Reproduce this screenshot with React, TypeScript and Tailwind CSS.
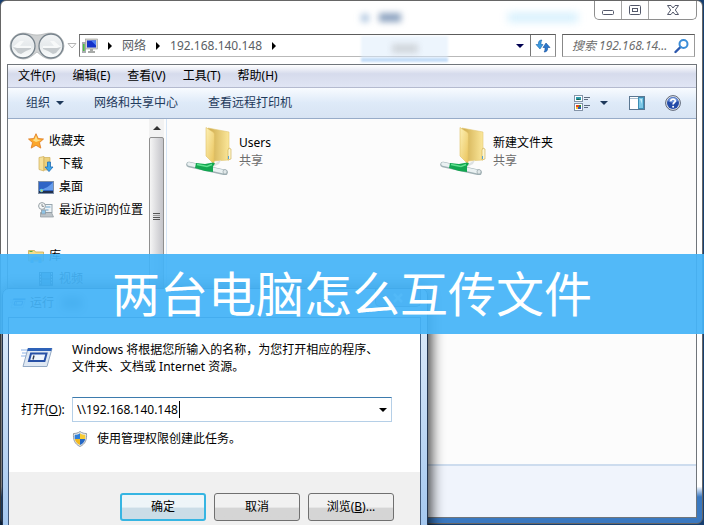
import type { ReactNode } from "react";

const menus = ["文件(F)", "编辑(E)", "查看(V)", "工具(T)", "帮助(H)"];

const folders = ["Users", "新建文件夹"];

function Triangle({ className = "" }: { className?: string }) {
  return (
    <svg className={`h-1 w-2 ${className}`} viewBox="0 0 8 4" fill="currentColor">
      <path d="M0 0h8L4 4z" />
    </svg>
  );
}

function Crumb() {
  return (
    <svg className="h-2 w-1" viewBox="0 0 4 8" fill="#000">
      <path d="M0 0l4 4-4 4z" />
    </svg>
  );
}

function HistoryButtons() {
  return (
    <svg className="h-7 w-14" viewBox="0 0 56 28">
      <defs>
        <linearGradient id="orb" x1="0" y1="0" x2="0" y2="1">
          <stop offset="0" stopColor="#f4f6f7" />
          <stop offset=".45" stopColor="#e6eaec" />
          <stop offset=".6" stopColor="#eceff0" />
          <stop offset="1" stopColor="#fbfdfd" />
        </linearGradient>
      </defs>
      <path
        d="M14 1C20 1 22 3 28 3S36 1 42 1a13 13 0 0 1 0 26c-6 0-9-3-14-7-5 4-8 7-14 7a13 13 0 0 1 0-26z"
        fill="#cfd1d2"
        stroke="#b3b6b8"
        strokeWidth=".8"
      />
      <circle cx="14" cy="14" r="12" fill="url(#orb)" stroke="#77838c" strokeWidth="1.3" />
      <circle cx="42" cy="14" r="12" fill="url(#orb)" stroke="#77838c" strokeWidth="1.3" />
      <path d="M4 15h18v2l-5 2-5 3-3-1z" fill="#c6cbce" />
      <path d="M4 15l7-6h4l-4 5h11v2H8z" fill="#f7f9f9" />
      <path d="M52 15H34v2l5 2 5 3 3-1z" fill="#c6cbce" />
      <path d="M52 15l-7-6h-4l4 5H34v2h14z" fill="#f7f9f9" />
    </svg>
  );
}

function NetworkIcon() {
  return (
    <svg className="h-4 w-4" viewBox="0 0 16 16">
      <rect x="0" y="4" width="4" height="11" fill="#a9adaf" />
      <rect x="1" y="6" width="1.5" height="7" fill="#49c33e" />
      <rect x="3.5" y="1" width="12" height="10" fill="#d5d5cf" stroke="#9a9a94" strokeWidth=".6" />
      <rect x="5" y="2.5" width="9" height="7" fill="#1532c9" />
      <path d="M9 2.5h5v5z" fill="#4c7df2" />
      <path d="M8 11h3v2h2v2H6v-2h2z" fill="#a8aaa8" />
    </svg>
  );
}

function RefreshIcon() {
  return (
    <svg className="h-4 w-4" viewBox="0 0 16 16">
      <path d="M7 2C4 2 3 4 3.500 6.500H1L5 11l3-4.500H6C6 4.500 6 3 7 2z" fill="#3a9be0" stroke="#1d65ac" strokeWidth=".6" />
      <path d="M9 14c3 0 4-2 3.500-4.500H15L11 5 8 9.500h2C10 11.500 10 13 9 14z" fill="#2b78cd" stroke="#174f99" strokeWidth=".6" />
    </svg>
  );
}

function SearchIcon() {
  return (
    <svg className="h-4 w-4 shrink-0" viewBox="0 0 16 16" fill="none">
      <path d="M6.500 9L1.500 14" stroke="#2d58ad" strokeWidth="2.400" strokeLinecap="round" />
      <circle cx="9.500" cy="6" r="4" stroke="#3b8dd8" strokeWidth="2" />
    </svg>
  );
}

function ViewIcon() {
  return (
    <svg className="h-4 w-4" viewBox="0 0 16 16">
      <rect x=".5" y=".5" width="8" height="6" fill="#fff" stroke="#8494a8" />
      <rect x="2" y="2" width="5" height="3" fill="#2f9cb0" />
      <path d="M2 5l2-1.500L7 5z" fill="#176348" />
      <rect x=".5" y="8.500" width="8" height="7" fill="#fff" stroke="#8494a8" />
      <rect x="2" y="10" width="3" height="2" fill="#e5431f" />
      <rect x="5" y="10" width="2" height="2" fill="#2f8f3a" />
      <rect x="2" y="12" width="2" height="2" fill="#f3c22b" />
      <rect x="4" y="12" width="3" height="2" fill="#3350b5" />
      <path d="M10 2.500h6M10 4.500h4M10 10.500h6M10 12.500h4" stroke="#5d6b80" />
    </svg>
  );
}

function PaneIcon() {
  return (
    <svg className="h-4 w-4" viewBox="0 0 16 16">
      <rect x=".5" y="1.500" width="15" height="13" fill="#fff" stroke="#5a7792" />
      <path d="M1 3.500h9" stroke="#a9bccd" />
      <rect x="9.500" y="2.500" width="5" height="11" fill="#7cc7e6" stroke="#3d8db3" />
      <path d="M11 4h2v5z" fill="#c7ecf8" />
    </svg>
  );
}

function HelpIcon() {
  return (
    <svg className="h-4 w-4" viewBox="0 0 16 16">
      <circle cx="8" cy="8" r="7.400" fill="#dfe5ef" stroke="#5d6575" />
      <circle cx="8" cy="8" r="6" fill="#234ba8" />
      <path d="M3 6a5.200 5.200 0 0 1 10 0c-3 2-7 2-10 0z" fill="#6d92d8" />
      <path d="M5.800 6.300C5.800 3.300 10.400 3.600 10.300 6c0 1.500-2.200 1.600-2.200 3.400" fill="none" stroke="#fff" strokeWidth="1.700" />
      <circle cx="8.100" cy="11.700" r="1" fill="#fff" />
    </svg>
  );
}

function StarIcon() {
  return (
    <svg className="h-4 w-4" viewBox="0 0 16 16">
      <path d="M8 .7l2.200 4.800 5.300.5-4 3.600 1.300 5.500L8 12.300l-4.800 2.800 1.300-5.500-4-3.600 5.300-.5z" fill="#fba72b" stroke="#e07a1d" strokeWidth=".8" />
      <path d="M8 2.500l1.600 4 3.800.4L8 9 4.500 7l2-.8z" fill="#ffdf83" />
    </svg>
  );
}

function DownloadIcon() {
  return (
    <svg className="h-4 w-4" viewBox="0 0 16 16">
      <path d="M1 1.500l5-1V15l-5-1.500z" fill="#f5e09a" stroke="#cfae56" strokeWidth=".7" />
      <path d="M6 1.500h6V14H6z" fill="#ecd07b" stroke="#cfae56" strokeWidth=".7" />
      <path d="M9.500 6h3v5H15l-4 4.600L7 11h2.500z" fill="#3ea6ea" stroke="#1f6db7" strokeWidth=".8" />
    </svg>
  );
}

function DesktopIcon() {
  return (
    <svg className="h-4 w-4" viewBox="0 0 16 16">
      <rect x=".5" y="2.500" width="15" height="12" fill="#2f65c6" stroke="#7d8fa8" />
      <path d="M1 11C7 10 12 7 15 3v8z" fill="#659cec" />
      <rect x="1" y="12" width="14" height="2" fill="#22314d" />
      <circle cx="3.500" cy="11.500" r="1.800" fill="#62c7d7" />
      <circle cx="3.800" cy="11.700" r=".8" fill="#f4cf45" />
    </svg>
  );
}

function RecentIcon() {
  return (
    <svg className="h-4 w-4" viewBox="0 0 16 16">
      <rect x="6" y="2.500" width="8" height="8" fill="#eef3f6" stroke="#97a5ae" />
      <path d="M7.500 5h5M7.500 8h3" stroke="#6ba4cc" />
      <path d="M2.500 10.500h11l2 4.500h-13z" fill="#bcc3c8" stroke="#8c969d" strokeWidth=".7" />
      <rect x="3.500" y="8" width="4" height="4" fill="#8fc4e6" stroke="#8c969d" strokeWidth=".7" />
      <circle cx="4" cy="4" r="3.400" fill="#f6f8f8" stroke="#98a1a6" />
      <path d="M4 2v2.300h2" fill="none" stroke="#6a7378" strokeWidth=".8" />
    </svg>
  );
}

function LibraryIcon() {
  return (
    <svg className="h-4 w-4" viewBox="0 0 16 16">
      <path d="M.5 2.500h6l1 1.500h8v9H.5z" fill="#f4dd8c" stroke="#c8a950" strokeWidth=".8" />
      <path d="M1.500 3.500h3" stroke="#4cb14b" strokeWidth="1.200" />
      <path d="M1 6h14v2H1z" fill="#fbf0bd" />
      <path d="M2.500 15V11c0-3 11-3 11 0v4h-3v-3h-5v3z" fill="#62b7e6" />
    </svg>
  );
}

function VideoIcon() {
  return (
    <svg className="h-4 w-4" viewBox="0 0 16 16">
      <rect x="1" y="1" width="14" height="14" fill="#26384a" />
      <rect x="4" y="2" width="8" height="5.500" fill="#5f8fb5" />
      <rect x="4" y="8.500" width="8" height="5.500" fill="#5f8fb5" />
      <path d="M2.500 2v12M13.500 2v12" stroke="#fff" strokeDasharray="1.500 1.500" />
    </svg>
  );
}

function SharedFolderIcon() {
  return (
    <svg className="h-12 w-12 shrink-0" viewBox="0 0 48 48">
      <defs>
        <linearGradient id="folderBack" x1="0" x2="1">
          <stop offset="0" stopColor="#cda94a" />
          <stop offset="1" stopColor="#fbe79a" />
        </linearGradient>
        <linearGradient id="folderFront" x1="0" x2="1" y2="1">
          <stop offset="0" stopColor="#fdf0b4" />
          <stop offset="1" stopColor="#e9c35a" />
        </linearGradient>
      </defs>
      <path d="M22 1l21 4v28l-15 1z" fill="url(#folderBack)" stroke="#e3c773" strokeWidth=".6" />
      <path d="M43 21l2 1v10l-3 1V23z" fill="#fdf5cf" stroke="#c9a747" strokeWidth=".6" />
      <path d="M42.500 29v3" stroke="#5ba2cf" />
      <path d="M20 .5l7 4.500c1.500 1 1.500 2 1.500 4l-.5 28-8-8z" fill="url(#folderFront)" stroke="#dfbf64" strokeWidth=".6" />
      <path d="M28 37l7-4-2 4-6 3z" fill="#dde1e2" />
      <path d="M3 37.500l36 8" stroke="#9fb0b4" strokeWidth="5.600" strokeLinecap="round" />
      <path d="M3 37l36 8" stroke="#eaf1f2" strokeWidth="3.600" strokeLinecap="round" />
      <path d="M10 36l9 1 8-1.500 2 1-2 3 0 5.500-8-1-10-3z" fill="#12a650" />
      <path d="M11 37.500l10 2 5-2" fill="none" stroke="#5fe08f" strokeWidth="1.500" />
      <ellipse cx="39" cy="44.800" rx="2" ry="2.300" fill="#dfe7e8" stroke="#95a4a7" strokeWidth=".7" />
    </svg>
  );
}

function RunIcon({ className }: { className: string }) {
  return (
    <svg className={className} viewBox="0 0 32 22">
      <path d="M0 3h9M1 6h7M0 9h6" stroke="#b4cdf0" strokeWidth="1.500" />
      <path d="M7 1.500h24l-5 18H2z" fill="#dfe8f3" stroke="#93a9c4" />
      <path d="M7 1h24l-.8 3H6.200z" fill="#2e62b8" />
      <path d="M10 6.500h15.500l-2 7.500H8z" fill="#eff5fd" stroke="#2750a6" strokeWidth="2" />
      <path d="M13 8.500l-1 4" stroke="#333c52" strokeWidth="1.400" />
    </svg>
  );
}

function ShieldIcon() {
  return (
    <svg className="h-4 w-4 shrink-0" viewBox="0 0 16 16">
      <path d="M8 .5c2 1.500 4 2 6.500 2 .5 6-1 10.500-6.500 13C2.500 13 1 8.500 1.500 2.500 4 2.500 6 2 8 .5z" fill="#e6e9ec" stroke="#7e8890" strokeWidth=".8" />
      <path d="M8 2.200V8H2.800a14 14 0 0 1 0-4.300C5 3.700 6.500 3.200 8 2.200z" fill="#2f7fd8" />
      <path d="M8 2.200V8h5.200a14 14 0 0 0 0-4.300C11 3.700 9.500 3.200 8 2.200z" fill="#f7cb35" />
      <path d="M8 14V8H2.800C3.400 10.800 5 12.800 8 14z" fill="#f2b91f" />
      <path d="M8 14V8h5.200c-.6 2.800-2.200 4.800-5.200 6z" fill="#2467c4" />
    </svg>
  );
}

function TreeItem({ icon, label, nested = false }: { icon: ReactNode; label: string; nested?: boolean }) {
  return (
    <a href="#" className={`flex h-[23px] items-center gap-[5px] whitespace-nowrap ${nested ? "pl-[30px]" : "pl-5"}`}>
      {icon}
      {label}
    </a>
  );
}

function WindowControls() {
  return (
    <div className="mr-[5px] flex h-[19px] rounded-b-[5px] border border-t-0 border-[#8e8e8e]">
      <button aria-label="最小化" className="flex w-[27px] items-center justify-center border-r border-[#a5a5a5]">
        <svg className="h-[14px] w-[14px]" viewBox="0 0 14 14">
          <rect x="1.500" y="7.500" width="11" height="4" rx="1" fill="#fff" stroke="#53586a" />
        </svg>
      </button>
      <button aria-label="最大化" className="flex w-[27px] items-center justify-center border-r border-[#a5a5a5]">
        <svg className="h-[14px] w-[14px]" viewBox="0 0 14 14">
          <rect x="1.500" y="2.500" width="11" height="9" rx="1" fill="#fff" stroke="#53586a" />
          <rect x="4.500" y="5.500" width="5" height="3" fill="#fff" stroke="#53586a" />
        </svg>
      </button>
      <button aria-label="关闭" className="flex w-[47px] items-center justify-center">
        <svg className="h-[14px] w-[14px]" viewBox="0 0 14 14">
          <path d="M1.500 2.500h3.500l2 2.500 2-2.500h3.500L9.300 7l3.200 4.500H9L7 9l-2 2.500H1.500L4.700 7z" fill="#fff" stroke="#53586a" />
        </svg>
      </button>
    </div>
  );
}

function ExplorerWindow() {
  return (
    <div className="mr-px flex h-[calc(100vh-1px)] flex-col overflow-hidden rounded-[6px] border border-[#666] bg-linear-to-b from-white from-93% to-[#3a78c0] to-95%">
      {/* Title bar */}
      <div className="flex h-[32px] shrink-0 items-start justify-end">
        <WindowControls />
      </div>

      {/* Address bar */}
      <div className="flex h-[25px] shrink-0 items-center pr-[7px] pl-2">
        <HistoryButtons />
        <svg className="mx-[2px] h-[6px] w-[10px] shrink-0" viewBox="0 0 10 6">
          <path d="M1 .5h8L5 5z" fill="#fff" stroke="#b5b5b5" />
        </svg>
        <div className="flex h-[23px] min-w-0 flex-1 items-center border border-t-[#5c5c5c] border-r-[#8a8a8a] border-b-[#b9b9b9] border-l-[#777] text-[#5a6065]">
          <div className="flex flex-1 items-center gap-[10px] pl-[2px]">
            <NetworkIcon />
            <Crumb />
            <span>网络</span>
            <Crumb />
            <span>192.168.140.148</span>
            <Crumb />
          </div>
          <button aria-label="历史记录" className="flex h-full w-5 items-center justify-center text-[#000050]">
            <Triangle />
          </button>
          <button aria-label="刷新" className="flex h-full w-[25px] items-center justify-center border-l border-[#777]">
            <RefreshIcon />
          </button>
        </div>
        <div className="ml-[6px] flex h-[23px] w-[133px] shrink-0 items-center border border-t-[#5c5c5c] border-r-[#999] border-b-[#b9b9b9] border-l-[#888] pr-1 pl-[9px]">
          <input
            aria-label="搜索"
            placeholder="搜索 192.168.14..."
            className="w-full min-w-0 bg-transparent italic outline-none placeholder:text-[#6d6d6d]"
          />
          <SearchIcon />
        </div>
      </div>

      {/* Client area */}
      <div className="mt-[6px] mr-[5px] mb-[5px] ml-[6px] flex min-h-0 flex-1 flex-col border border-[#70757b] bg-[#fcfcfc]">
        <nav className="flex h-[23px] shrink-0 items-center gap-[17px] border-b border-[#b4bacf] bg-linear-to-b from-white via-[#d6dbec] via-40% to-[#e0e5f4] pl-[10px] text-black">
          {menus.map((menu) => (
            <button key={menu}>{menu}</button>
          ))}
        </nav>
        <div className="flex h-[31px] shrink-0 items-center border-b border-[#98acc8] bg-linear-to-b from-[#f8fbff] via-[#deeaf8] via-50% to-[#d8e4f3] pr-[15px] pl-[18px] text-[#1e395b]">
          <button className="flex items-center gap-[6px]">
            组织
            <Triangle />
          </button>
          <button className="ml-[30px]">网络和共享中心</button>
          <button className="ml-[30px]">查看远程打印机</button>
          <div className="ml-auto flex items-center">
            <button aria-label="更改视图" className="flex items-center gap-[10px]">
              <ViewIcon />
              <Triangle />
            </button>
            <button aria-label="预览窗格" className="ml-[21px]">
              <PaneIcon />
            </button>
            <button aria-label="帮助" className="ml-5">
              <HelpIcon />
            </button>
          </div>
        </div>

        <div className="flex min-h-0 flex-1">
          <aside className="flex w-[159px] shrink-0 border-r border-[#d6e5f5]">
            <div className="min-w-0 flex-1 overflow-hidden pt-[10px] text-black">
              <TreeItem icon={<StarIcon />} label="收藏夹" />
              <TreeItem icon={<DownloadIcon />} label="下载" nested />
              <TreeItem icon={<DesktopIcon />} label="桌面" nested />
              <TreeItem icon={<RecentIcon />} label="最近访问的位置" nested />
              <div className="mt-[23px]">
                <TreeItem icon={<LibraryIcon />} label="库" />
                <TreeItem icon={<VideoIcon />} label="视频" nested />
              </div>
            </div>
            {/* Scrollbar */}
            <div className="mr-[2px] flex w-[15px] flex-col bg-[#f2f2f2]">
              <div className="flex h-[18px] items-center justify-center text-[#333]">
                <Triangle className="rotate-180" />
              </div>
              <div className="flex h-[158px] flex-col items-center justify-center gap-px rounded-[2px] border border-[#8f8f8f] bg-linear-to-r from-[#f5f5f5] to-[#c4c4c9]">
                <div className="h-px w-[7px] bg-[#555]" />
                <div className="h-px w-[7px] bg-[#999]" />
                <div className="h-px w-[7px] bg-[#555]" />
                <div className="h-px w-[7px] bg-[#555]" />
              </div>
            </div>
          </aside>
          <main className="flex flex-1 flex-wrap content-start pt-2 pl-[19px]">
            {folders.map((name) => (
              <a key={name} href="#" className="flex w-[254px] gap-[5px]">
                <SharedFolderIcon />
                <div className="pt-[7px] leading-[18px]">
                  <div className="text-black">{name}</div>
                  <div className="text-[#6d6d6d]">共享</div>
                </div>
              </a>
            ))}
          </main>
        </div>
        <footer className="h-[53px] shrink-0 border-t-2 border-[#cddcee] bg-[#f0f4fc]" />
      </div>
    </div>
  );
}

function RunDialog() {
  return (
    <div
      role="dialog"
      aria-label="运行"
      className="absolute top-[288px] left-[2px] flex h-[260px] w-[426px] flex-col rounded-t-[7px] border border-[#23344e] bg-linear-to-b from-[#e2edf9] via-[#cfe2f7] via-30% to-[#9fc4ee] pr-[6px] pl-[5px] shadow-[0_0_14px_3px_rgba(0,0,0,0.8)]"
    >
      <div className="flex h-7 shrink-0 items-center pl-[2px] text-black">
        <RunIcon className="h-[11px] w-4" />
        <span className="pl-1">运行</span>
        <span className="ml-2 h-3 w-5 bg-[#6f8296] blur-[4px]" />
        <button aria-label="关闭" className="ml-auto flex h-[18px] w-[46px] items-center justify-center self-start rounded-b-[5px] border border-t-0 border-[#54657b] bg-[#a6b8cc]">
          <svg className="h-[10px] w-[10px]" viewBox="0 0 10 10">
            <path d="M1 1l8 8M9 1L1 9" stroke="#fff" strokeWidth="2.500" />
          </svg>
        </button>
      </div>
      <div className="flex flex-1 flex-col border border-[#435a7b] bg-white text-black">
        <div className="h-[154px] shrink-0 pt-[23px] pl-3">
          <div className="flex gap-[19px]">
            <RunIcon className="mt-[6px] h-[22px] w-8" />
            <p className="leading-[17px]">
              Windows 将根据您所输入的名称，为您打开相应的程序、
              <br />
              文件夹、文档或 Internet 资源。
            </p>
          </div>
          <div className="mt-[22px] flex items-center">
            <label htmlFor="open" className="w-[51px] shrink-0">
              打开(<u>O</u>):
            </label>
            <div className="relative flex h-[25px] w-[320px] items-center border border-[#b5cfe7] border-t-[#3d7bad] pl-1">
              <input id="open" defaultValue="\\192.168.140.148" className="min-w-0 flex-1 outline-none" />
              <span className="absolute top-[3px] left-[106px] h-[17px] w-px bg-black" />
              <button aria-label="展开列表" className="flex h-full w-4 items-center justify-center">
                <Triangle />
              </button>
            </div>
          </div>
          <div className="mt-2 flex items-center gap-[9px] pl-[51px]">
            <ShieldIcon />
            <span>使用管理权限创建此任务。</span>
          </div>
        </div>
        <div className="flex flex-1 items-start justify-end gap-2 bg-[#f0f0f0] pt-[21px] pr-[26px]">
          <button className="h-7 w-[86px] rounded-[3px] border-2 border-[#36b5e2] bg-linear-to-b from-[#eef5f8] from-50% to-[#cbdde7] to-55%">
            确定
          </button>
          <button className="h-7 w-[86px] rounded-[3px] border border-[#707070] bg-linear-to-b from-[#f1f1f1] from-50% to-[#d5d5d5] to-55%">
            取消
          </button>
          <button className="h-7 w-[86px] rounded-[3px] border border-[#707070] bg-linear-to-b from-[#f1f1f1] from-50% to-[#d5d5d5] to-55%">
            浏览(<u>B</u>)...
          </button>
        </div>
      </div>
    </div>
  );
}

export default function App() {
  return (
    <div className="relative h-screen overflow-hidden bg-[#173f70] font-['Noto_Sans','Noto_Sans_CJK_SC',sans-serif] text-[12px] leading-[18px]">
      <ExplorerWindow />

      {/* Smudges of the window behind the glass frame */}
      <div className="pointer-events-none absolute top-[14px] left-[361px] h-[8px] w-[8px] bg-[#7fa3cd]/60 blur-[3px]" />
      <div className="pointer-events-none absolute top-[13px] left-[379px] h-[9px] w-[22px] bg-[#5d7ca5]/70 blur-[3px]" />
      <div className="pointer-events-none absolute top-[13px] left-[508px] h-[9px] w-[70px] bg-[#b5e4fb]/60 blur-[4px]" />
      <div className="pointer-events-none absolute top-[36px] left-[361px] h-[26px] w-[87px] border-b-4 border-[#a9cdf5]/60 bg-[#dcebfc]/50 blur-[1px]" />
      <div className="pointer-events-none absolute top-[44px] left-[392px] h-[9px] w-[26px] bg-[#8d8d8d]/30 blur-[3px]" />

      <RunDialog />

      {/* Caption band */}
      <div className="absolute inset-x-0 top-[254px] flex h-20 items-center justify-center bg-[#45b4f8]/93">
        <h1 className="text-[48px] leading-[80px] font-normal whitespace-nowrap text-white">两台电脑怎么互传文件</h1>
      </div>
    </div>
  );
}
